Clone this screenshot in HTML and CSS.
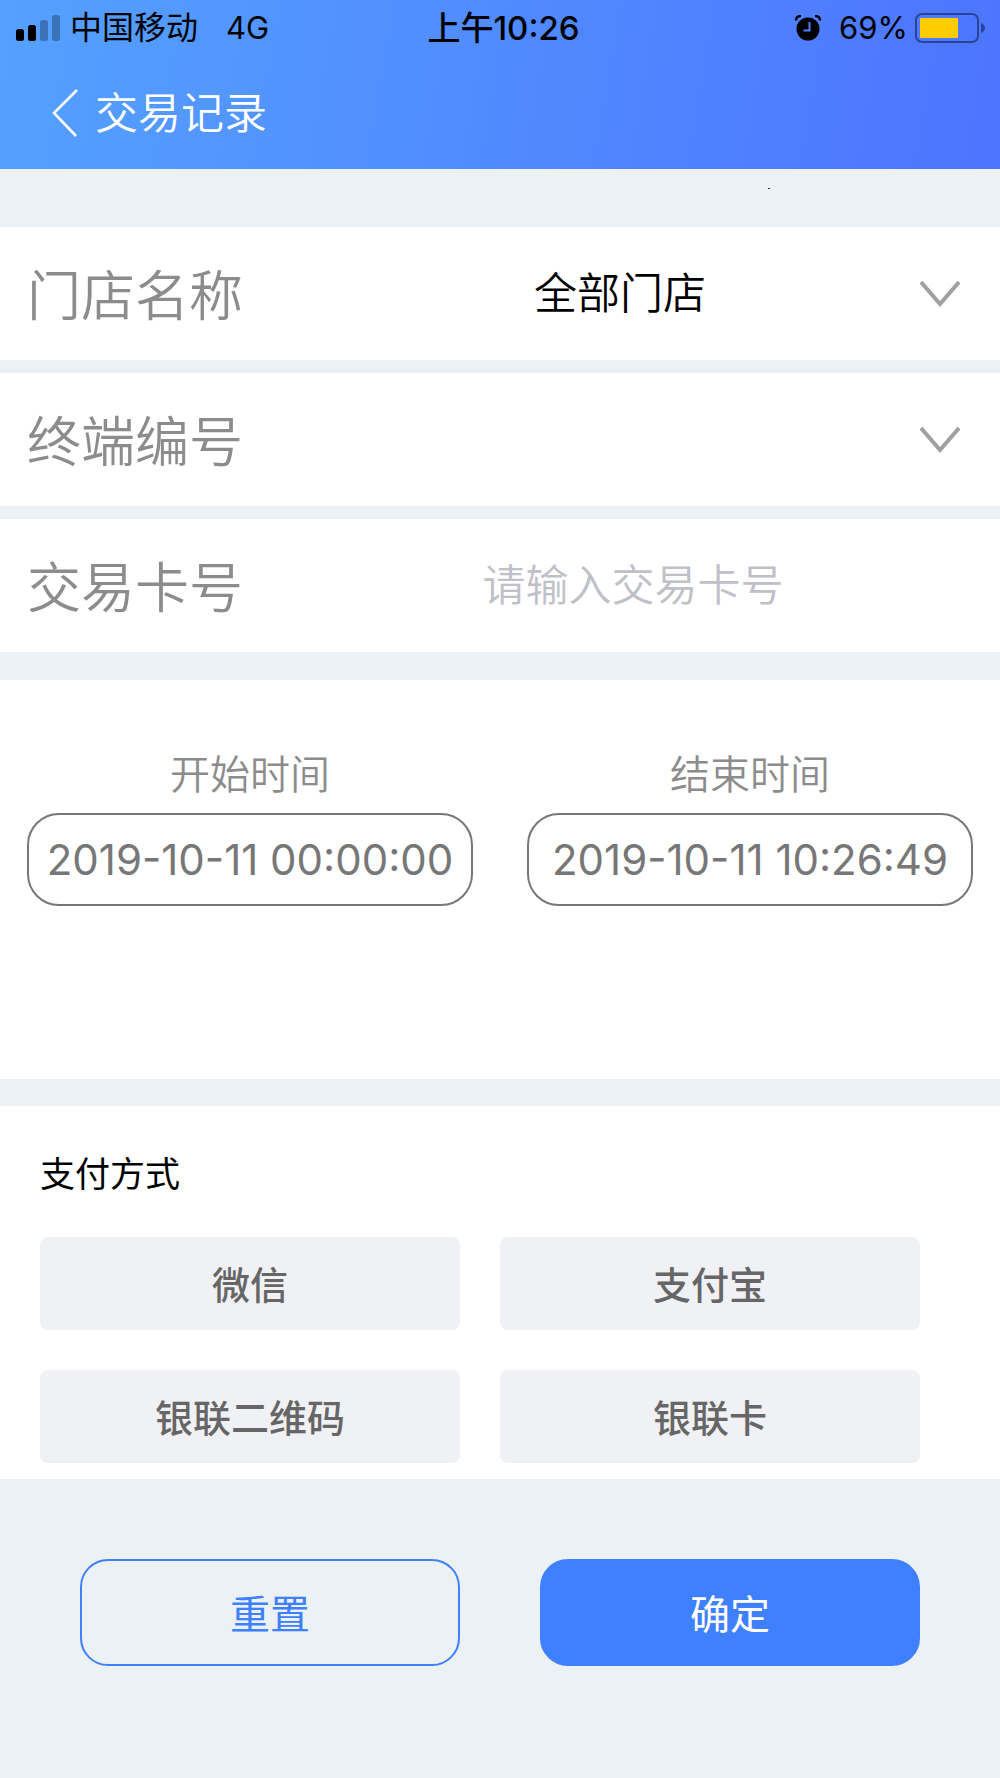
FILE: index.html
```html
<!DOCTYPE html>
<html lang="zh-CN">
<head>
<meta charset="utf-8">
<meta name="viewport" content="width=device-width, initial-scale=1">
<title>交易记录</title>
<link rel="stylesheet" href="styles.css">
</head>
<body>
<header class="header">
  <div class="status">
    <div class="status-left">
      <svg class="signal" width="46" height="28" viewBox="0 0 46 28" aria-hidden="true">
        <rect x="1" y="15" width="8" height="12" rx="2.5"/>
        <rect x="13" y="11" width="8" height="16" rx="2.5"/>
        <rect x="25" y="6" width="8" height="21" rx="2.5" opacity=".28"/>
        <rect x="37" y="1" width="8" height="26" rx="2.5" opacity=".28"/>
      </svg>
      <span>中国移动</span>
      <span class="network">4G</span>
    </div>
    <div class="clock">上午10:26</div>
    <div class="status-right">
      <svg class="alarm" width="26" height="26" viewBox="0 0 26 26" aria-hidden="true">
        <circle cx="13" cy="14" r="11.5"/>
        <path d="M1 5.5Q1 1 6 1M25 5.5Q25 1 20 1" fill="none" stroke="#000" stroke-width="2.4"/>
        <path d="M14.5 7v8.500H8.500" fill="none" stroke="#4d82ff" stroke-width="2"/>
      </svg>
      <span>69%</span>
      <svg class="battery" width="72" height="32" viewBox="0 0 72 32" aria-hidden="true">
        <rect x="2" y="2" width="62" height="28" rx="6" fill="none" stroke="#284595" stroke-width="2"/>
        <rect x="6" y="6" width="38" height="20" rx="1" fill="#fc0"/>
        <path d="M67 11q4 2 4 5t-4 5z" fill="#284595"/>
      </svg>
    </div>
  </div>
  <nav class="titlebar">
    <a class="back" href="#" aria-label="返回">
      <svg width="28" height="50" viewBox="0 0 28 50" aria-hidden="true">
        <path d="M26 2L3 25l22 23" fill="none" stroke="#fff" stroke-width="2.600"/>
      </svg>
    </a>
    <h1 class="title">交易记录</h1>
  </nav>
</header>

<main>
  <form class="form">
    <div class="spacer"><i class="speck"></i></div>
    <div class="fields">
      <div class="row">
        <label class="label" for="store">门店名称</label>
        <div class="control">
          <select class="select" id="store"><option>全部门店</option></select>
          <svg class="chevron" width="40" height="28" viewBox="0 0 40 28" aria-hidden="true"><path d="M1 2l19 22L39 2" fill="none" stroke="#a0a0a0" stroke-width="4"/></svg>
        </div>
      </div>
      <div class="row">
        <label class="label" for="terminal">终端编号</label>
        <div class="control">
          <select class="select" id="terminal"><option></option></select>
          <svg class="chevron" width="40" height="28" viewBox="0 0 40 28" aria-hidden="true"><path d="M1 2l19 22L39 2" fill="none" stroke="#a0a0a0" stroke-width="4"/></svg>
        </div>
      </div>
      <div class="row">
        <label class="label" for="card">交易卡号</label>
        <div class="control">
          <input class="input" id="card" type="text" placeholder="请输入交易卡号">
        </div>
      </div>
    </div>

    <section class="times">
      <div class="time">
        <label class="time-label" for="start">开始时间</label>
        <input class="time-input" id="start" type="text" value="2019-10-11 00:00:00">
      </div>
      <div class="time">
        <label class="time-label" for="end">结束时间</label>
        <input class="time-input" id="end" type="text" value="2019-10-11 10:26:49">
      </div>
    </section>

    <section class="payment">
      <h2 class="payment-title">支付方式</h2>
      <div class="options">
        <button class="option" type="button">微信</button>
        <button class="option" type="button">支付宝</button>
        <button class="option" type="button">银联二维码</button>
        <button class="option" type="button">银联卡</button>
      </div>
    </section>

    <div class="actions">
      <button class="action action-reset" type="reset">重置</button>
      <button class="action action-submit" type="button">确定</button>
    </div>
  </form>
</main>
</body>
</html>
```

FILE: styles.css
```css
* {
  box-sizing: border-box;
}

body {
  margin: 0;
  background: #ebf1f4;
  color: #000;
  font-family: Inter, "Noto Sans CJK SC", sans-serif;
}

button,
input,
select {
  margin: 0;
  border: 0;
  background: none;
  font-family: inherit;
}

/* Header */

.header {
  padding-bottom: 24px;
  background: linear-gradient(100deg, #54a1ff, #4d74ff);
}

.status {
  display: grid;
  grid-template-columns: 1fr auto 1fr;
  align-items: center;
  height: 56px;
  padding: 0 14px 0 15px;
  font-size: 32px;
  line-height: 40px;
}

.status-left,
.status-right {
  display: flex;
  align-items: center;
}

.signal {
  margin-right: 9px;
}

.network {
  margin-left: 28px;
  font-size: 31px;
}

.clock {
  padding-left: 6px;
  font-size: 33px;
  font-weight: 500;
}

.status-right {
  justify-content: flex-end;
  font-size: 31px;
}

.alarm {
  margin-right: 18px;
}

.battery {
  margin-left: 6px;
}

.titlebar {
  display: flex;
  align-items: center;
  gap: 16px;
  height: 89px;
  padding: 25px 0 0 51px;
}

.back {
  display: flex;
}

.title {
  margin: 0;
  font-size: 43px;
  font-weight: 350;
  line-height: 56px;
  color: #fff;
}

/* Fields */

.spacer {
  position: relative;
  height: 58px;
}

.speck {
  position: absolute;
  top: 19px;
  left: 76.8%;
  width: 2px;
  height: 1px;
  background: #333;
}

.fields {
  display: grid;
  gap: 13px;
}

.row {
  display: flex;
  align-items: center;
  height: 133px;
  padding: 0 22px 2px 27px;
  background: #fff;
}

.label {
  width: 261px;
  font-size: 54px;
  font-weight: 350;
  color: #8c8c8c;
}

.control {
  position: relative;
  display: flex;
  flex: 1;
}

.select,
.input {
  width: 100%;
  height: 80px;
  padding: 0;
  font-size: 43px;
  font-weight: 350;
  text-align: center;
}

.select {
  appearance: none;
  padding-right: 26px;
  color: #000;
  text-align-last: center;
}

.input::placeholder {
  color: #c0c0c8;
}

.chevron {
  position: absolute;
  top: 27px;
  right: 18px;
  pointer-events: none;
}

/* Time range */

.times {
  display: grid;
  grid-template-columns: 1fr 1fr;
  gap: 54px;
  margin-top: 28px;
  padding: 65px 27px 173px;
  background: #fff;
}

.time {
  display: grid;
  gap: 8px;
}

.time-label {
  font-size: 40px;
  font-weight: 350;
  line-height: 60px;
  text-align: center;
  color: #8c8c8c;
}

.time-input {
  width: 100%;
  height: 93px;
  padding: 0;
  border: 2px solid #777;
  border-radius: 32px;
  font-size: 42px;
  text-align: center;
  color: #777;
}

/* Payment methods */

.payment {
  margin-top: 27px;
  padding: 44px 80px 16px 40px;
  background: #fff;
}

.payment-title {
  margin: 0 0 39px;
  font-size: 35px;
  font-weight: 400;
  line-height: 48px;
}

.options {
  display: grid;
  grid-template-columns: 1fr 1fr;
  gap: 40px;
}

.option {
  height: 93px;
  padding: 0 0 2px;
  border-radius: 8px;
  background: #f0f1f4;
  font-size: 38px;
  font-weight: 500;
  color: #666;
}

/* Actions */

.actions {
  display: grid;
  grid-template-columns: 1fr 1fr;
  gap: 80px;
  padding: 80px;
}

.action {
  height: 107px;
  padding: 0 0 2px;
  border: 2px solid #3e80ff;
  border-radius: 28px;
  font-size: 40px;
}

.action-reset {
  color: #3e80ff;
}

.action-submit {
  background: #3e80ff;
  color: #fff;
}
```
